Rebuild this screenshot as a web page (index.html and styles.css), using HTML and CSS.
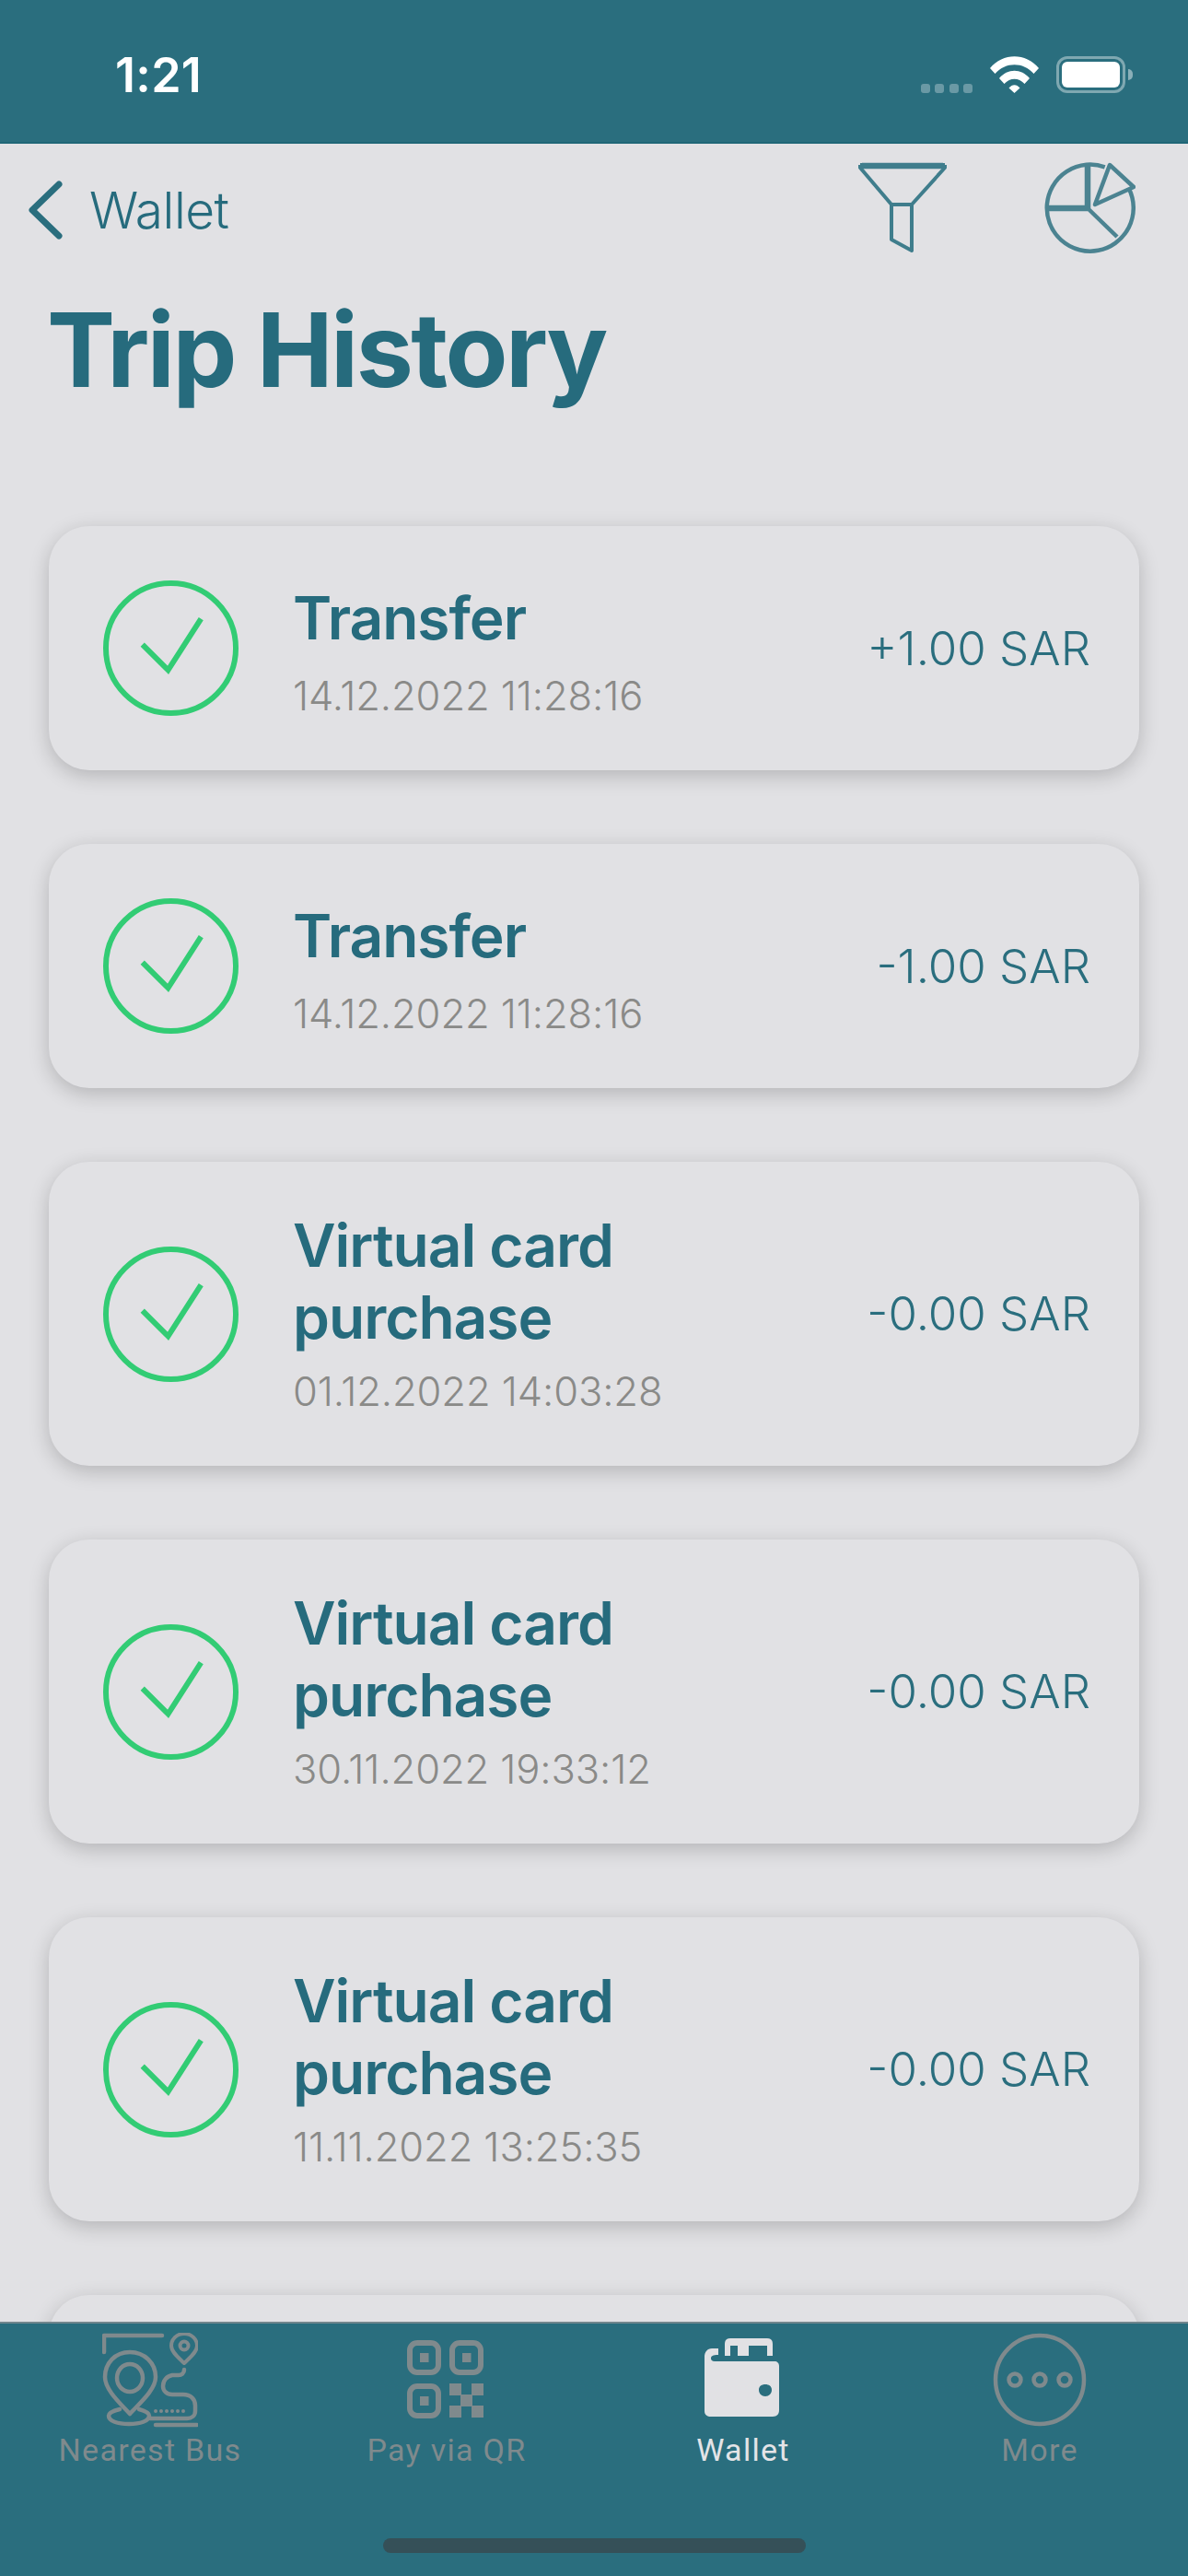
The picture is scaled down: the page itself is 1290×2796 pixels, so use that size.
FILE: index.html
```html
<!DOCTYPE html>
<html lang="en">
<head>
<meta charset="utf-8">
<title>Trip History</title>
<link rel="stylesheet" href="styles.css">
</head>
<body>
<div class="app">
  <header class="status">
    <span class="time">1:21</span>
    <div class="status-icons">
      <div class="signal"><i></i><i></i><i></i><i></i></div>
      <svg class="wifi" viewBox="0 0 53 40"><path d="M0 13C14-4 39-4 53 13L47.5 19C36 6 17 6 5.5 19Z"/><path d="M10 24C19 13 34 13 43 24L37.5 30C31 23 22 23 15.5 30Z"/><path d="M20.5 34.5C24 30 29 30 32.5 34.5L26.5 40Z"/></svg>
      <div class="battery"><div class="battery-fill"></div></div>
      <div class="battery-nub"></div>
    </div>
  </header>
  <main class="content">
    <nav class="topbar">
      <div class="back">
        <svg class="chevron" viewBox="0 0 38 64"><path d="M34 4 5 32l29 28"/></svg>
        <span class="back-label">Wallet</span>
      </div>
      <div class="actions">
        <svg class="filter" viewBox="0 0 96 100"><path d="M2 3H94M2 3V6L36 46H58L94 6V3M36 46V84L58 96V46"/><path class="thick" d="M4 4H92"/></svg>
        <svg class="pie" viewBox="0 0 102 102"><path d="M95 29A47 47 0 1 1 68.700 5.400"/><path class="thick" d="M50 50V4M50 50H4"/><path d="M50 50 82 81"/><path d="M58 46 74 3 100 27Z"/></svg>
      </div>
    </nav>
    <h1 class="page-title">Trip History</h1>
    <section class="list">
      <article class="card">
        <svg class="check" viewBox="0 0 148 148"><circle cx="74" cy="74" r="71"/><path d="M43 70 71 98 107 42"/></svg>
        <div class="info info-short"><h2 class="name">Transfer</h2><p class="date">14.12.2022 11:28:16</p></div>
        <span class="amount">+1.00 SAR</span>
      </article>
      <article class="card">
        <svg class="check" viewBox="0 0 148 148"><circle cx="74" cy="74" r="71"/><path d="M43 70 71 98 107 42"/></svg>
        <div class="info info-short"><h2 class="name">Transfer</h2><p class="date">14.12.2022 11:28:16</p></div>
        <span class="amount">-1.00 SAR</span>
      </article>
      <article class="card">
        <svg class="check" viewBox="0 0 148 148"><circle cx="74" cy="74" r="71"/><path d="M43 70 71 98 107 42"/></svg>
        <div class="info"><h2 class="name">Virtual card purchase</h2><p class="date">01.12.2022 14:03:28</p></div>
        <span class="amount">-0.00 SAR</span>
      </article>
      <article class="card">
        <svg class="check" viewBox="0 0 148 148"><circle cx="74" cy="74" r="71"/><path d="M43 70 71 98 107 42"/></svg>
        <div class="info"><h2 class="name">Virtual card purchase</h2><p class="date">30.11.2022 19:33:12</p></div>
        <span class="amount">-0.00 SAR</span>
      </article>
      <article class="card">
        <svg class="check" viewBox="0 0 148 148"><circle cx="74" cy="74" r="71"/><path d="M43 70 71 98 107 42"/></svg>
        <div class="info"><h2 class="name">Virtual card purchase</h2><p class="date">11.11.2022 13:25:35</p></div>
        <span class="amount">-0.00 SAR</span>
      </article>
      <article class="card"></article>
    </section>
  </main>
  <footer class="tabbar">
    <div class="tabs">
      <div class="tab">
        <svg class="tab-icon" viewBox="0 0 104 104"><g class="ico-stroke">
          <path d="M2 21V3H65"/>
          <path d="M30 21C14 21 3 33 3 48C3 62 20 77 30 88C40 77 58 62 58 48C58 33 46 21 30 21Z"/>
          <ellipse cx="30" cy="49" rx="14" ry="15"/>
          <path d="M19 83C11 85 7 87 7 90C7 96 17 99 29 99C41 99 51 96 51 90C51 87 47 85 40 83"/>
          <path d="M89 1C81 1 75 7 75 14C75 21 83 27 89 33C95 27 103 21 103 14C103 7 97 1 89 1Z" class="thin"/>
          <circle cx="89" cy="14" r="4.500" class="thin"/>
          <path d="M89 40C89 44 86 46 83 46H76C70 47 66 52 66 58C66 63 70 67 76 67H88C96 67 101 72 101 79V85C101 90 97 93 92 93H52"/>
          <path d="M58 100H103"/>
          <path class="dots" d="M58 85H93"/>
        </g></svg>
        <span class="tab-label">Nearest Bus</span>
      </div>
      <div class="tab">
        <svg class="tab-icon" viewBox="0 0 104 104"><g class="ico-qr">
          <rect x="12" y="11" width="31" height="32" rx="8"/>
          <rect x="58" y="11" width="31" height="32" rx="8"/>
          <rect x="12" y="58" width="31" height="32" rx="8"/>
        </g><g class="ico-fill">
          <rect x="23" y="22" width="9.500" height="10"/><rect x="69" y="22" width="9.500" height="10"/><rect x="23" y="69" width="9.500" height="10"/>
          <rect x="55" y="55" width="13" height="13"/><rect x="79" y="55" width="13" height="13"/><rect x="67" y="67" width="13" height="13"/><rect x="55" y="79" width="13" height="13"/><rect x="79" y="79" width="13" height="13"/>
        </g></svg>
        <span class="tab-label">Pay via QR</span>
      </div>
      <div class="tab active">
        <svg class="tab-icon" viewBox="0 0 104 104"><path class="wallet-fill" fill-rule="evenodd" d="M25 17H18C13 17 10 21 10 26V85C10 89 13 91 17 91H84C89 91 91 88 91 84V36C91 33 89 31 86 31H21C18 31 17 29 17 28C17 25 19 24 25 24ZM76 56C72 56 69 58 69 62C69 66 72 69 76 69C80 69 83 66 83 62C83 58 80 56 76 56Z"/><path class="wallet-fill" d="M32 25V12C32 8 34 6 38 6H78C82 6 84 8 84 12V25H78V14H58V25H46V14H38V25Z"/></svg>
        <span class="tab-label">Wallet</span>
      </div>
      <div class="tab">
        <svg class="tab-icon" viewBox="0 0 104 104"><g class="ico-stroke"><circle cx="52" cy="51" r="48"/><circle cx="25" cy="51" r="6.500"/><circle cx="52" cy="51" r="6.500"/><circle cx="79" cy="51" r="6.500"/></g></svg>
        <span class="tab-label">More</span>
      </div>
    </div>
    <div class="home-indicator"></div>
  </footer>
</div>
</body>
</html>
```
FILE: styles.css
```css
* { box-sizing: border-box; }
html, body { margin: 0; padding: 0; }
body { width: 1290px; height: 2796px; overflow: hidden; background: #e1e1e4; font-family: "Inter", "Liberation Sans", sans-serif; color: #266b7d; }
.app { display: flex; flex-direction: column; height: 2796px; }

.status { height: 156px; flex: none; background: #2a6e7e; border-bottom: 2px solid #1f6677; display: flex; justify-content: space-between; align-items: flex-start; padding: 57px 60px 0 125px; }
.time { font-size: 52px; line-height: 50px; font-weight: 600; color: #fff; letter-spacing: .3px; }
.status-icons { display: flex; align-items: flex-start; padding-top: 4px; }
.signal { display: flex; gap: 5.500px; margin-top: 30px; margin-right: 19px; }
.signal i { display: block; width: 10px; height: 10px; border-radius: 3px; background: rgba(255,255,255,.3); }
.wifi { width: 53px; height: 40px; fill: #fff; margin-right: 19px; }
.battery { width: 75px; height: 40px; border: 3px solid rgba(255,255,255,.4); border-radius: 12px; padding: 3px; }
.battery-fill { height: 100%; background: #fff; border-radius: 6px; }
.battery-nub { width: 5px; height: 12px; margin: 14px 0 0 3px; background: rgba(255,255,255,.45); border-radius: 0 6px 6px 0; }

.content { flex: 1; min-height: 0; overflow: hidden; }
.topbar { display: flex; justify-content: space-between; align-items: flex-start; padding: 20px 57px 0 30px; height: 126px; }
.back { display: flex; align-items: center; margin-top: 20px; }
.chevron { width: 38px; height: 64px; fill: none; stroke: #2a6e7e; stroke-width: 7; stroke-linecap: round; stroke-linejoin: round; }
.back-label { font-size: 55px; line-height: 64px; font-weight: 300; margin-left: 29px; letter-spacing: -.5px; }
.actions { display: flex; gap: 103px; align-items: flex-start; }
.filter { width: 96px; height: 100px; fill: none; stroke: #3f7d8c; stroke-width: 4; stroke-linejoin: round; }
.pie { width: 102px; height: 102px; fill: none; stroke: #4b8391; stroke-width: 4.500; stroke-linejoin: round; }
.filter .thick, .pie .thick { stroke-width: 6.500; }
.page-title { margin: 33px 0 0; font-size: 111px; line-height: 130px; font-weight: 700; padding-left: 51px; letter-spacing: -2.500px; }

.list { display: flex; flex-direction: column; gap: 80px; padding: 126px 53px 0; }
.card { width: 1184px; min-height: 265px; flex: none; background: #e1e1e4; border-radius: 44px; box-shadow: 0 6px 22px rgba(0,0,0,.2); display: flex; align-items: center; padding: 52px 53px 52px 59px; }
.check { width: 147px; height: 147px; flex: none; fill: none; stroke: #32cc74; stroke-width: 6; stroke-linejoin: miter; }
.info { width: 560px; margin-left: 59px; }
.info-short { padding-top: 8px; }
.name { margin: 0; font-size: 64px; line-height: 78px; font-weight: 600; letter-spacing: -1px; max-width: 440px; }
.date { margin: 12px 0 0; font-size: 43.500px; line-height: 58px; font-weight: 300; color: #8a8a88; letter-spacing: -.1px; }
.info-short .date { margin-top: 16px; }
.amount { margin-left: auto; font-size: 51px; line-height: 60px; font-weight: 300; color: #2a6e7e; white-space: nowrap; }

.tabbar { flex: none; height: 276px; background: #2a6e7e; border-top: 2px solid #71868d; display: flex; flex-direction: column; }
.tabs { display: grid; grid-template-columns: repeat(4, 1fr); padding-left: 2px; }
.tab { display: flex; flex-direction: column; align-items: center; padding-top: 10px; }
.tab-icon { width: 104px; height: 104px; display: block; }
.tab-label { margin-top: 4px; font-family: "Roboto", "Liberation Sans", sans-serif; font-size: 34px; line-height: 38px; letter-spacing: 1.3px; color: #7f8a8d; }
.active .tab-label { color: #e4e4e7; }
.ico-stroke { fill: none; stroke: #7f8a8d; stroke-width: 4.500; stroke-linecap: round; stroke-linejoin: round; }
.ico-stroke .thin { stroke-width: 4; }
.ico-stroke .dots { stroke-width: 4; stroke-dasharray: 0 6; }
.ico-qr { fill: none; stroke: #7f8a8d; stroke-width: 6; }
.ico-fill { fill: #7f8a8d; }
.wallet-fill { fill: #e1e1e4; }
.home-indicator { width: 459px; height: 16px; border-radius: 8px; background: #355058; align-self: center; margin-top: 77px; }
```
